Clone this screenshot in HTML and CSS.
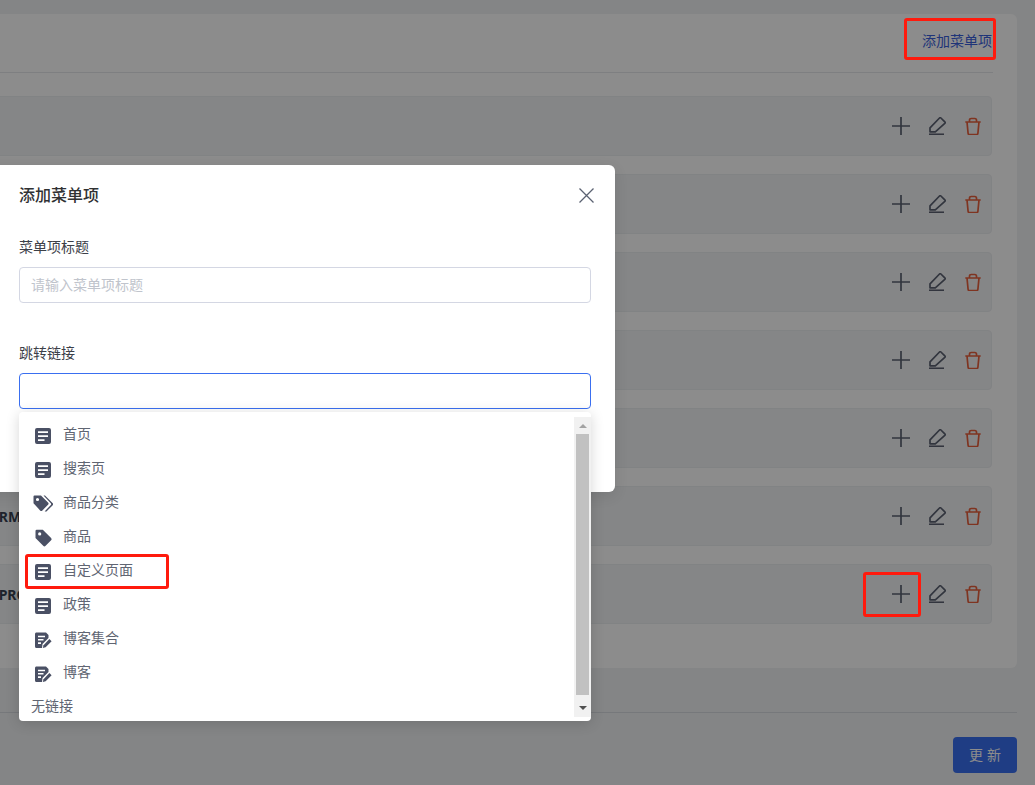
FILE: index.html
```html
<!DOCTYPE html>
<html lang="zh-CN">
<head>
<meta charset="utf-8">
<title>菜单</title>
<link rel="stylesheet" href="styles.css">
</head>
<body>
<svg class="defs" width="0" height="0" aria-hidden="true">
  <symbol id="i-plus" viewBox="0 0 18 18"><path d="M9 0v18M0 9h18" fill="none" stroke="currentColor" stroke-width="1.7"/></symbol>
  <symbol id="i-edit" viewBox="0 0 18 18"><path d="M2 14.800V10.800L11.500 1a1 1 0 0 1 1.400 0l3.900 3.900a1 1 0 0 1 0 1.400L7.300 14.800z" fill="none" stroke="currentColor" stroke-width="1.700" stroke-linejoin="round"/><path d="M1 17.400h15" fill="none" stroke="currentColor" stroke-width="1.900"/></symbol>
  <symbol id="i-trash" viewBox="0 0 16 18"><path d="M.3 5h15.400M4.500 5V3.200c0-1 .7-1.700 1.700-1.700h3.600c1 0 1.700.7 1.700 1.700V5M2 5l1.100 11.300c0 .7.500 1.200 1.200 1.200h7.400c.7 0 1.200-.5 1.200-1.200L14 5" fill="none" stroke="currentColor" stroke-width="1.700" stroke-linejoin="round"/></symbol>
  <symbol id="i-page" viewBox="-2 -1 20 18"><path fill-rule="evenodd" d="M2 0h12a2 2 0 0 1 2 2v12a2 2 0 0 1-2 2H2a2 2 0 0 1-2-2V2a2 2 0 0 1 2-2zm1 3.200v1.700h10V3.200zm0 4v1.700h10V7.200zm0 4v1.700h6.500v-1.700z"/></symbol>
  <symbol id="i-tags" viewBox="0 0 20 18"><path fill-rule="evenodd" d="M1.500.5H8l7 7a1.600 1.600 0 0 1 0 2.300l-5.600 5.600a1.600 1.600 0 0 1-2.300 0L.5 8.300V1.500a1 1 0 0 1 1-1zm3 2.400a1.600 1.600 0 1 0 0 3.200 1.600 1.600 0 0 0 0-3.200z"/><path d="M10.500.5H12L19.500 8a1.700 1.700 0 0 1 0 2.400l-6 6H11.900l-.1-.2 6-6.200a1.300 1.300 0 0 0 0-1.700z"/></symbol>
  <symbol id="i-tag" viewBox="-2 0 20 18"><path fill-rule="evenodd" d="M1.700.7h6.100l8.300 8.200a1.700 1.700 0 0 1 0 2.400l-5.500 5.500a1.700 1.700 0 0 1-2.400 0L.5 9.100V1.900A1.200 1.200 0 0 1 1.700.7zm3 2.600a1.600 1.600 0 1 0 0 3.200 1.600 1.600 0 0 0 0-3.200z"/></symbol>
  <symbol id="i-blog" viewBox="-2 -1.500 20 18"><path fill-rule="evenodd" d="M1.500 0h9.500l2.500 2.500v3L7.500 11.500 7 15.500H1.500A1.500 1.500 0 0 1 0 14v-12.500C0 .7.700 0 1.500 0zM3 3.200v1.600h7V3.200zm0 3.300v1.600h5.500V6.500zm0 3.300v1.600h3v-1.600z"/><path d="m14.400 6.600 2.200 2.100-6 6-2.800.8.700-2.800z"/></symbol>
</svg>

<main class="page">
  <section class="card">
    <header class="card-head"><a class="add-link">添加菜单项</a></header>
    <div class="rows">
      <div class="row"><span class="row-title"></span><div class="row-actions"><svg class="ic-plus"><use href="#i-plus"/></svg><svg class="ic-edit"><use href="#i-edit"/></svg><svg class="ic-trash"><use href="#i-trash"/></svg></div></div>
      <div class="row"><span class="row-title"></span><div class="row-actions"><svg class="ic-plus"><use href="#i-plus"/></svg><svg class="ic-edit"><use href="#i-edit"/></svg><svg class="ic-trash"><use href="#i-trash"/></svg></div></div>
      <div class="row"><span class="row-title"></span><div class="row-actions"><svg class="ic-plus"><use href="#i-plus"/></svg><svg class="ic-edit"><use href="#i-edit"/></svg><svg class="ic-trash"><use href="#i-trash"/></svg></div></div>
      <div class="row"><span class="row-title"></span><div class="row-actions"><svg class="ic-plus"><use href="#i-plus"/></svg><svg class="ic-edit"><use href="#i-edit"/></svg><svg class="ic-trash"><use href="#i-trash"/></svg></div></div>
      <div class="row"><span class="row-title"></span><div class="row-actions"><svg class="ic-plus"><use href="#i-plus"/></svg><svg class="ic-edit"><use href="#i-edit"/></svg><svg class="ic-trash"><use href="#i-trash"/></svg></div></div>
      <div class="row"><span class="row-title">FORMAT</span><div class="row-actions"><svg class="ic-plus"><use href="#i-plus"/></svg><svg class="ic-edit"><use href="#i-edit"/></svg><svg class="ic-trash"><use href="#i-trash"/></svg></div></div>
      <div class="row"><span class="row-title">IMPROVE</span><div class="row-actions"><svg class="ic-plus"><use href="#i-plus"/></svg><svg class="ic-edit"><use href="#i-edit"/></svg><svg class="ic-trash"><use href="#i-trash"/></svg></div></div>
    </div>
  </section>
  <footer class="page-foot"><button class="btn-primary" type="button">更 新</button></footer>
</main>

<div class="overlay"></div>

<div class="modal">
  <div class="modal-head">
    <h2 class="modal-title">添加菜单项</h2>
    <svg class="modal-close" viewBox="0 0 15 15"><path d="M.5.5l14 14M14.500.5l-14 14" fill="none" stroke="currentColor" stroke-width="1.300"/></svg>
  </div>
  <label class="field-label">菜单项标题</label>
  <div class="input"><span class="placeholder">请输入菜单项标题</span></div>
  <label class="field-label field-label-second">跳转链接</label>
  <div class="input input-focus"></div>
</div>

<div class="dropdown">
  <ul class="menu">
    <li class="menu-item"><svg class="mi"><use href="#i-page"/></svg>首页</li>
    <li class="menu-item"><svg class="mi"><use href="#i-page"/></svg>搜索页</li>
    <li class="menu-item"><svg class="mi"><use href="#i-tags"/></svg>商品分类</li>
    <li class="menu-item"><svg class="mi"><use href="#i-tag"/></svg>商品</li>
    <li class="menu-item"><svg class="mi"><use href="#i-page"/></svg>自定义页面</li>
    <li class="menu-item"><svg class="mi"><use href="#i-page"/></svg>政策</li>
    <li class="menu-item"><svg class="mi"><use href="#i-blog"/></svg>博客集合</li>
    <li class="menu-item"><svg class="mi"><use href="#i-blog"/></svg>博客</li>
    <li class="menu-item menu-plain">无链接</li>
  </ul>
  <div class="scrollbar">
    <span class="arrow arrow-up"></span>
    <span class="thumb"></span>
    <span class="arrow arrow-down"></span>
  </div>
</div>

<div class="mark mark-link"></div>
<div class="mark mark-plus"></div>
<div class="mark mark-item"></div>
</body>
</html>
```

FILE: styles.css
```css
* { box-sizing: border-box; }
html, body { margin: 0; height: 100%; }
body {
  width: 1035px;
  height: 785px;
  overflow: hidden;
  position: relative;
  background: #f1f2f4;
  font-family: "Noto Sans CJK SC", "Noto Sans", sans-serif;
  font-size: 14px;
}
.defs { position: absolute; }

.page { padding-top: 14px; margin-left: -60px; width: 1095px; padding-right: 18px; }
.card {
  height: 654px;
  background: #fff;
  border-radius: 6px;
  padding: 0 24px;
}
.card-head {
  height: 59px;
  padding: 15px 1px 0 0;
  text-align: right;
  border-bottom: 1px solid #e5e7eb;
  line-height: 22px;
}
.add-link { color: #3a5fdc; }
.rows { display: flex; flex-direction: column; gap: 18px; padding-top: 23px; padding-right: 1px; }
.row {
  height: 60px;
  display: flex;
  align-items: center;
  justify-content: space-between;
  background: #f3f4f6;
  border: 1px solid #eceef1;
  border-radius: 4px;
}
.row-title {
  margin-left: 15px;
  font-family: "Noto Sans", sans-serif;
  font-size: 14px;
  font-weight: 700;
  color: #374151;
}
.row-actions { display: flex; align-items: center; padding-right: 10px; }
.row-actions svg { display: block; height: 18px; }
.ic-plus { width: 18px; color: #5b6272; }
.ic-edit { width: 18px; margin-left: 18px; color: #5b6272; }
.ic-trash { width: 16px; margin-left: 19px; color: #e8603c; }

.page-foot {
  margin-top: 44px;
  border-top: 1px solid #d8dbe0;
  padding-top: 24px;
  display: flex;
  justify-content: flex-end;
}
.btn-primary {
  width: 64px;
  height: 36px;
  border: 0;
  border-radius: 4px;
  padding: 0 0 2px;
  background: #3a6ff0;
  color: #fff;
  font: inherit;
  word-spacing: 1px;
}

.overlay { position: absolute; inset: 0; background: rgba(0, 0, 0, .45); }

.modal {
  position: absolute;
  left: -25px;
  top: 165px;
  width: 640px;
  height: 327px;
  background: #fff;
  border-radius: 6px;
  box-shadow: 0 4px 14px rgba(0, 0, 0, .1);
  padding: 0 21px 0 44px;
}
.modal-head { height: 60px; display: flex; align-items: center; justify-content: space-between; }
.modal-title { margin: 0 0 2px; font-size: 16px; font-weight: 500; color: #303133; line-height: 58px; }
.modal-close { width: 15px; height: 15px; color: #5b6272; }
.field-label { display: block; font-size: 14px; line-height: 22px; color: #3c4048; margin-top: 10px; }
.field-label-second { margin-top: 38px; }
.input {
  margin-top: 10px;
  height: 36px;
  border: 1px solid #d4d7e3;
  border-radius: 4px;
  padding: 0 11px;
  line-height: 32px;
  width: 572px;
  background: #fff;
}
.input-focus { border-color: #3a6ff0; }
.placeholder { color: #c0c4cc; }

.dropdown {
  position: absolute;
  left: 19px;
  top: 412px;
  width: 572px;
  height: 309px;
  background: #fff;
  border-radius: 4px;
  box-shadow: 0 2px 14px rgba(0, 0, 0, .16);
  overflow: hidden;
  display: flex;
}
.menu { flex: 1; margin: 0; padding: 4px 0 0; list-style: none; }
.menu-item {
  height: 34px;
  display: flex;
  align-items: center;
  padding-left: 14px;
  color: #606572;
  font-size: 14px;
}
.mi { width: 20px; height: 18px; margin: 6px 10px 0 0; color: #4a5064; fill: currentColor; flex: none; }
.menu-plain { padding-left: 12px; }
.scrollbar {
  width: 17px;
  margin: 5px 0 4px;
  background: #f1f1f1;
  display: flex;
  flex-direction: column;
  align-items: center;
  flex: none;
}
.thumb { width: 13px; height: 261px; background: #c1c1c1; flex: none; }
.arrow { display: flex; align-items: center; }
.arrow::before { content: ""; border-left: 4px solid transparent; border-right: 4px solid transparent; }
.arrow-up { height: 17px; flex: none; }
.arrow-down { flex: 1; padding-top: 3px; }
.arrow-up::before { border-bottom: 4px solid #a3a3a3; }
.arrow-down::before { border-top: 4px solid #505050; }

.mark { position: absolute; border: 3px solid #ff1a0d; border-radius: 3px; }
.mark-link { left: 904px; top: 18px; width: 92px; height: 42px; }
.mark-plus { left: 863px; top: 572px; width: 58px; height: 45px; }
.mark-item { left: 25px; top: 554px; width: 144px; height: 35px; }
```
